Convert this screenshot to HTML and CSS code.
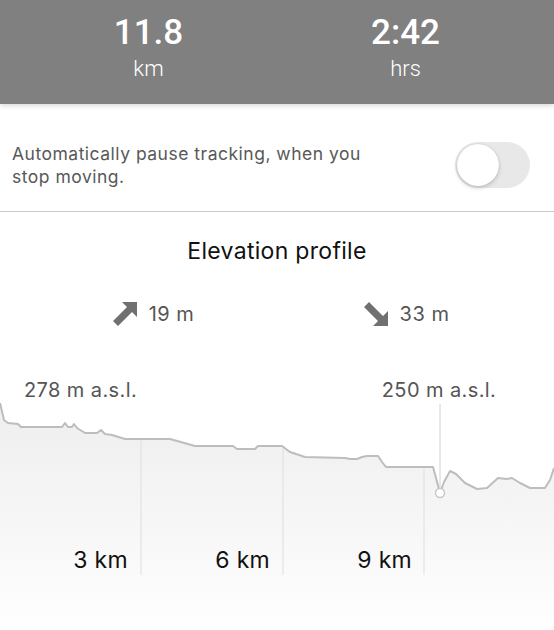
FILE: index.html
```html
<!DOCTYPE html>
<html lang="en">
<head>
    <meta charset="UTF-8">
    <meta name="viewport" content="width=device-width, initial-scale=1.0">
    <title>Track summary</title>
    <link rel="stylesheet" href="styles.css">
</head>
<body>
    <!-- Distance / duration summary -->
    <div class="summary">
        <div class="summary-item">
            <div class="summary-value">11.8</div>
            <div class="summary-unit">km</div>
        </div>
        <div class="summary-item">
            <div class="summary-value">2:42</div>
            <div class="summary-unit">hrs</div>
        </div>
    </div>

    <div class="setting-row">
        <p class="setting-text">Automatically pause tracking, when you stop moving.</p>
        <div class="toggle"><span class="toggle-knob"></span></div>
    </div>

    <div class="elevation">
        <h2>Elevation profile</h2>

        <div class="climb-row">
            <div class="climb">
                <svg class="climb-icon" viewBox="0 0 24 24"><path d="M24 0 V15 L19 10 L5 24 L0 19 L14 5 L9 0 Z"/></svg>
                <span>19 m</span>
            </div>
            <div class="climb">
                <svg class="climb-icon" viewBox="0 0 24 24"><path d="M24 24 H9 L14 19 L0 5 L5 0 L19 14 L24 9 Z"/></svg>
                <span>33 m</span>
            </div>
        </div>

        <svg class="chart" viewBox="0 0 554 260" width="554" height="260">
            <defs>
                <linearGradient id="fade" x1="0" y1="0" x2="0" y2="1">
                    <stop offset="0" stop-color="#eeeeee"/>
                    <stop offset="0.75" stop-color="#fafafa"/>
                    <stop offset="1" stop-color="#ffffff"/>
                </linearGradient>
            </defs>
            <path class="chart-area" d="M0 33 L4 50 L8 53 L18 54 L21 57 L62 57 L65 53 L68 57 L72 57 L74 54 L77 58 L85 63 L97 63 L101 60 L105 64 L112 65 L125 69 L170 69 L195 76 L233 76 L237 79 L255 79 L258 76 L282 76 L290 82 L305 87 L345 88 L350 89 L357 89 L362 87 L367 86 L378 86 L382 92 L386 97 L433 97 L436 108 L440 123 L444 112 L450 101 L456 104 L465 113 L477 119 L487 118 L498 108 L507 109 L512 108 L520 113 L530 118 L545 118 L550 110 L554 98 L554 260 L0 260 Z"/>
            <line class="grid" x1="141" y1="69" x2="141" y2="205"/>
            <line class="grid" x1="283" y1="76" x2="283" y2="205"/>
            <line class="grid" x1="424" y1="97" x2="424" y2="205"/>
            <polyline class="chart-line" points="0,33 4,50 8,53 18,54 21,57 62,57 65,53 68,57 72,57 74,54 77,58 85,63 97,63 101,60 105,64 112,65 125,69 170,69 195,76 233,76 237,79 255,79 258,76 282,76 290,82 305,87 345,88 350,89 357,89 362,87 367,86 378,86 382,92 386,97 433,97 436,108 440,123 444,112 450,101 456,104 465,113 477,119 487,118 498,108 507,109 512,108 520,113 530,118 545,118 550,110 554,98"/>
            <line class="marker-line" x1="440" y1="34" x2="440" y2="118"/>
            <circle class="marker-dot" cx="440" cy="123" r="4.5"/>
            <text class="alt-label" x="24" y="27">278 m a.s.l.</text>
            <text class="alt-label" x="439" y="27" text-anchor="middle">250 m a.s.l.</text>
            <text class="km-label" x="128" y="198" text-anchor="end">3 km</text>
            <text class="km-label" x="270" y="198" text-anchor="end">6 km</text>
            <text class="km-label" x="412" y="198" text-anchor="end">9 km</text>
        </svg>
    </div>
</body>
</html>
```

FILE: styles.css
```css
body {
    margin: 0;
    padding: 0;
    background-color: #fff;
    font-family: 'Inter', 'Liberation Sans', sans-serif;
    width: 554px;
    height: 630px;
    overflow: hidden;
}
.summary {
    display: flex;
    height: 104px;
    padding: 15px 20px 0;
    box-sizing: border-box;
    background-color: #808080;
    box-shadow: 0 2px 5px rgba(0, 0, 0, 0.15);
    color: #fff;
    font-family: 'Roboto', sans-serif;
    position: relative;
}
.summary-item {
    flex: 1;
    text-align: center;
}
.summary-value {
    font-size: 35px;
    line-height: 36px;
    font-weight: 500;
}
.summary-unit {
    margin-top: 7px;
    font-size: 22px;
    line-height: 22px;
    font-weight: 300;
}
.setting-row {
    display: flex;
    align-items: center;
    justify-content: space-between;
    padding: 38px 24px 23px 12px;
    border-bottom: 1px solid #cacaca;
}
.setting-text {
    margin: 0;
    width: 362px;
    font-size: 17.5px;
    line-height: 23px;
    letter-spacing: 0.5px;
    color: #585858;
}
.toggle {
    width: 75px;
    height: 46px;
    border-radius: 23px;
    background-color: #e8e8e8;
    display: flex;
    align-items: center;
    padding: 0 2px;
    box-sizing: border-box;
}
.toggle-knob {
    width: 42px;
    height: 42px;
    border-radius: 50%;
    background-color: #fff;
    box-shadow: 0 2px 4px rgba(0, 0, 0, 0.18), 0 0 1px rgba(0, 0, 0, 0.2);
}
.elevation h2 {
    margin: 25px 0 0;
    text-align: center;
    font-size: 23px;
    line-height: 28px;
    letter-spacing: 0.3px;
    font-weight: 400;
    color: #111;
}
.climb-row {
    display: flex;
    padding: 0 21px 0 27px;
    margin-top: 37px;
}
.climb {
    flex: 1;
    display: flex;
    justify-content: center;
    align-items: center;
    gap: 12px;
    font-size: 20px;
    line-height: 24px;
    letter-spacing: 0.5px;
    color: #555;
}
.climb-icon {
    width: 24px;
    height: 24px;
    fill: #707070;
}
.chart {
    display: block;
    margin-top: 44px;
}
.chart-area {
    fill: url(#fade);
}
.chart-line {
    fill: none;
    stroke: #bdbdbd;
    stroke-width: 2;
    stroke-linejoin: round;
}
.grid {
    stroke: #dedede;
    stroke-width: 1;
}
.marker-line {
    stroke: #d0d0d0;
    stroke-width: 1;
}
.marker-dot {
    fill: #fff;
    stroke: #c8c8c8;
    stroke-width: 1.5;
}
.alt-label {
    font-family: 'Inter', 'Liberation Sans', sans-serif;
    font-size: 20px;
    letter-spacing: 0.4px;
    fill: #555;
}
.km-label {
    font-family: 'Inter', 'Liberation Sans', sans-serif;
    font-size: 23px;
    letter-spacing: 0.3px;
    fill: #111;
}
```
